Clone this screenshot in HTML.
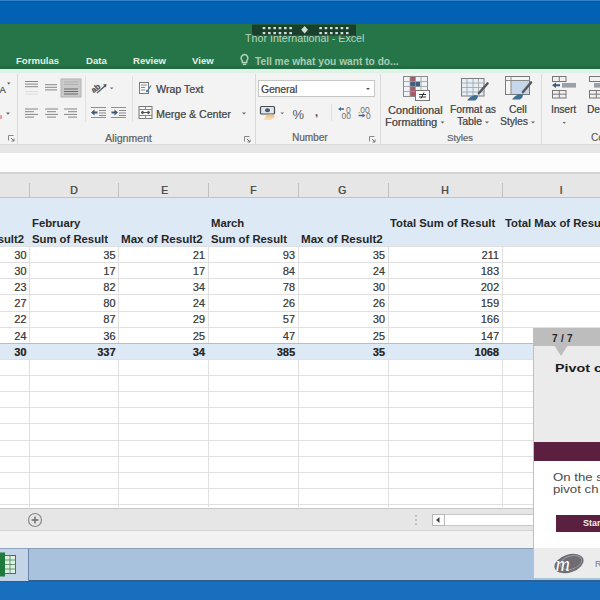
<!DOCTYPE html>
<html><head><meta charset="utf-8"><style>
*{margin:0;padding:0;box-sizing:border-box}
html,body{width:600px;height:600px;overflow:hidden;background:#fff;font-family:"Liberation Sans",sans-serif}
.a{position:absolute}
.t{position:absolute;white-space:pre;line-height:1}
.tab{color:#e3efe6;font-size:9.6px;font-weight:700}
.rt{color:#4f4f4f;font-size:10.8px;text-shadow:0.35px 0 0 rgba(80,80,80,0.8)}
.lbl{color:#6a6a6a;font-size:10px;text-shadow:0.3px 0 0 rgba(106,106,106,0.7)}
.sep{position:absolute;width:1px;background:#d9d9d9}
.ch{color:#4a4a4a;font-size:10.5px;text-shadow:0.4px 0 0 rgba(74,74,74,0.8)}
.vg{position:absolute;width:1px;background:#e0e0e0}
.hg{position:absolute;height:1px;background:#e0e0e0}
.hd{position:absolute;white-space:pre;line-height:1;font-weight:700;color:#262626;font-size:11.3px}
.num{position:absolute;white-space:pre;line-height:1;color:#3c3c3c;font-size:11px;text-align:right;text-shadow:0.3px 0 0 rgba(60,60,60,0.6)}
</style></head><body>
<div id="wrap" style="position:absolute;left:0;top:0;width:600px;height:600px;overflow:hidden">
<div class="a" style="left:0px;top:0px;width:600px;height:24px;background:#0261b3;border-top:1px solid #3382cc"></div>
<div class="a" style="left:0px;top:1px;width:600px;height:1px;background:#0056a6;"></div>
<div class="a" style="left:0px;top:24px;width:600px;height:45px;background:#257548;"></div>
<div class="a" style="left:0px;top:66px;width:600px;height:3px;background:#216c43;"></div>
<div class="a" style="left:0px;top:69px;width:600px;height:4px;background:#dff2e6;"></div>
<div class="a" style="left:0px;top:73px;width:600px;height:71px;background:#f3f3f3;"></div>
<div class="a" style="left:0px;top:144px;width:600px;height:9px;background:#e6e6e6;"></div>
<div class="a" style="left:0px;top:144px;width:600px;height:1px;background:#dadada;"></div>
<div class="a" style="left:0px;top:153px;width:600px;height:19px;background:#fdfdfd;"></div>
<div class="a" style="left:0px;top:172px;width:600px;height:2px;background:#d2d2d2;"></div>
<div class="a" style="left:0px;top:174px;width:600px;height:23px;background:#e6e6e6;"></div>
<div class="a" style="left:0px;top:197px;width:600px;height:1px;background:#bcc4cc;"></div>
<div class="a" style="left:0px;top:198px;width:600px;height:310px;background:#ffffff;"></div>
<div class="a" style="left:0px;top:507px;width:600px;height:24px;background:#e6e6e6;border-top:1px solid #fff"></div>
<div class="a" style="left:0px;top:508px;width:600px;height:1px;background:#c6c6c6;"></div>
<div class="a" style="left:0px;top:530px;width:600px;height:1px;background:#d4d4d4;"></div>
<div class="a" style="left:0px;top:531px;width:600px;height:17px;background:#f2f2f2;"></div>
<div class="a" style="left:0px;top:548px;width:600px;height:33px;background:#a8c2de;border-top:1px solid #8d9eb2"></div>
<div class="a" style="left:0px;top:579px;width:600px;height:1px;background:#a3c6e6;"></div>
<div class="a" style="left:0px;top:580px;width:600px;height:2px;background:#2d5f92;"></div>
<div class="a" style="left:0px;top:582px;width:600px;height:18px;background:#176fbd;"></div>
<div class="t " style="left:245px;top:33px;font-size:10.7px;color:#b9d3c0">Thor International - Excel</div>
<svg class="a" style="left:252px;top:24px" width="105" height="12" viewBox="0 0 105 12"><rect x="0" y="0.5" width="104" height="11" fill="#183326" opacity="0.82"/><rect x="10.70" y="3" width="2.6" height="2.2" fill="#cfe0d4"/><rect x="16.03" y="3" width="2.6" height="2.2" fill="#cfe0d4"/><rect x="21.36" y="3" width="2.6" height="2.2" fill="#cfe0d4"/><rect x="26.69" y="3" width="2.6" height="2.2" fill="#cfe0d4"/><rect x="32.02" y="3" width="2.6" height="2.2" fill="#cfe0d4"/><rect x="37.35" y="3" width="2.6" height="2.2" fill="#cfe0d4"/><rect x="10.70" y="8" width="2.6" height="2.2" fill="#cfe0d4"/><rect x="16.03" y="8" width="2.6" height="2.2" fill="#cfe0d4"/><rect x="21.36" y="8" width="2.6" height="2.2" fill="#cfe0d4"/><rect x="26.69" y="8" width="2.6" height="2.2" fill="#cfe0d4"/><rect x="32.02" y="8" width="2.6" height="2.2" fill="#cfe0d4"/><rect x="37.35" y="8" width="2.6" height="2.2" fill="#cfe0d4"/><rect x="67.30" y="3" width="2.6" height="2.2" fill="#cfe0d4"/><rect x="72.63" y="3" width="2.6" height="2.2" fill="#cfe0d4"/><rect x="77.96" y="3" width="2.6" height="2.2" fill="#cfe0d4"/><rect x="83.29" y="3" width="2.6" height="2.2" fill="#cfe0d4"/><rect x="88.62" y="3" width="2.6" height="2.2" fill="#cfe0d4"/><rect x="93.95" y="3" width="2.6" height="2.2" fill="#cfe0d4"/><rect x="67.30" y="8" width="2.6" height="2.2" fill="#cfe0d4"/><rect x="72.63" y="8" width="2.6" height="2.2" fill="#cfe0d4"/><rect x="77.96" y="8" width="2.6" height="2.2" fill="#cfe0d4"/><rect x="83.29" y="8" width="2.6" height="2.2" fill="#cfe0d4"/><rect x="88.62" y="8" width="2.6" height="2.2" fill="#cfe0d4"/><rect x="93.95" y="8" width="2.6" height="2.2" fill="#cfe0d4"/><path d="M52.6 2 L56 5.7 L52.6 9.4 L49.2 5.7Z" fill="#cfe0d4"/></svg>
<div class="t tab" style="left:16px;top:56px;">Formulas</div>
<div class="t tab" style="left:86px;top:56px;">Data</div>
<div class="t tab" style="left:133px;top:56px;">Review</div>
<div class="t tab" style="left:192px;top:56px;">View</div>
<div class="t " style="left:255px;top:56.5px;font-size:10.2px;font-weight:700;color:#a9cbb4">Tell me what you want to do...</div>
<svg class="a" style="left:239px;top:53px" width="12" height="13" viewBox="0 0 12 13"><path d="M5.5 1.5a3.6 3.6 0 0 0-2.2 6.3V9.6h4.4V7.8A3.6 3.6 0 0 0 5.5 1.5z" fill="none" stroke="#b4d4be" stroke-width="1.5"/><path d="M3.8 11.3h3.4" stroke="#b4d4be" stroke-width="1.5"/></svg>
<div class="t rt" style="left:156px;top:84px;font-size:10.6px">Wrap Text</div>
<div class="t rt" style="left:156px;top:109px;font-size:10.6px">Merge &amp; Center</div>
<div class="t lbl" style="left:105px;top:133px;font-size:10.5px">Alignment</div>
<div class="a" style="left:258px;top:80px;width:117px;height:17px;background:#fff;border:1px solid #c6c6c6"></div>
<div class="t rt" style="left:261px;top:85px;font-size:10.2px">General</div>
<div class="t lbl" style="left:292px;top:133px;">Number</div>
<div class="t rt" style="left:388px;top:105px;font-size:10.9px">Conditional</div>
<div class="t rt" style="left:385px;top:117px;font-size:10.9px">Formatting</div>
<div class="t rt" style="left:450px;top:105px;font-size:10.2px">Format as</div>
<div class="t rt" style="left:457px;top:117px;font-size:10.4px">Table</div>
<div class="t rt" style="left:509px;top:105px;font-size:10.2px">Cell</div>
<div class="t rt" style="left:500px;top:117px;font-size:10.2px">Styles</div>
<div class="t lbl" style="left:447px;top:133px;font-size:9.5px">Styles</div>
<div class="t rt" style="left:551px;top:105px;font-size:10px">Insert</div>
<div class="t rt" style="left:587px;top:105px;font-size:10px">Delete</div>
<div class="t lbl" style="left:591px;top:133px;font-size:10px">Cells</div>
<div class="sep" style="left:17px;top:74px;height:70px"></div>
<div class="sep" style="left:255px;top:74px;height:70px"></div>
<div class="sep" style="left:380px;top:74px;height:70px"></div>
<div class="sep" style="left:541px;top:74px;height:70px"></div>
<div class="sep" style="left:85px;top:76px;height:46px;background:#e0e0e0"></div>
<div class="sep" style="left:132px;top:76px;height:46px;background:#e0e0e0"></div>
<div class="sep" style="left:331px;top:104px;height:17px;background:#e0e0e0"></div>
<svg class="a" style="left:0;top:0" width="600" height="150" viewBox="0 0 600 150"><text x="-0.5" y="92.5" font-family="Liberation Sans" font-size="9.5" fill="#4a4a4a" stroke="#4a4a4a" stroke-width="0.2">A</text><path d="M7 82.5h3.5l-1.75 2z" fill="#555"/><path d="M6 112.5h4l-2 2.2z" fill="#666"/><rect x="0" y="115" width="2" height="4" fill="#e8a0a0"/><path d="M8.5 140.5V135.5H13.5" fill="none" stroke="#888" stroke-width="1"/><path d="M11 138L14 141M14 138.5V141H11.5" fill="none" stroke="#777" stroke-width="1"/><path d="M244.5 141.5V136.5H249.5" fill="none" stroke="#888" stroke-width="1"/><path d="M247 139L250 142M250 139.5V142H247.5" fill="none" stroke="#777" stroke-width="1"/><path d="M369.5 141.5V136.5H374.5" fill="none" stroke="#888" stroke-width="1"/><path d="M372 139L375 142M375 139.5V142H372.5" fill="none" stroke="#777" stroke-width="1"/><rect x="25" y="81" width="13" height="1" fill="#858585"/><rect x="25" y="83.6" width="13" height="1" fill="#858585"/><rect x="25" y="86.2" width="13" height="1" fill="#858585"/><rect x="25" y="91" width="13" height="1" fill="#dedede"/><rect x="25" y="93.5" width="13" height="1" fill="#dedede"/><rect x="45" y="84.2" width="12" height="1" fill="#858585"/><rect x="45" y="86.8" width="12" height="1" fill="#858585"/><rect x="45" y="89.4" width="12" height="1" fill="#858585"/><rect x="61" y="79" width="20" height="18" fill="#c9c9c9" stroke="#b3b3b3" stroke-width="1"/><rect x="64" y="81.5" width="14" height="1" fill="#b0b0b0"/><rect x="64" y="84" width="14" height="1" fill="#b0b0b0"/><rect x="64" y="88.5" width="14" height="1" fill="#6a6a6a"/><rect x="64" y="91" width="14" height="1" fill="#6a6a6a"/><rect x="64" y="93.5" width="14" height="1" fill="#6a6a6a"/><rect x="25" y="108.5" width="13" height="1" fill="#858585"/><rect x="25" y="111.2" width="9" height="1" fill="#858585"/><rect x="25" y="113.9" width="13" height="1" fill="#858585"/><rect x="25" y="116.6" width="9" height="1" fill="#858585"/><rect x="45" y="108.5" width="13" height="1" fill="#858585"/><rect x="47" y="111.2" width="9" height="1" fill="#858585"/><rect x="45" y="113.9" width="13" height="1" fill="#858585"/><rect x="47" y="116.6" width="9" height="1" fill="#858585"/><rect x="64" y="108.5" width="13" height="1" fill="#858585"/><rect x="68" y="111.2" width="9" height="1" fill="#858585"/><rect x="64" y="113.9" width="13" height="1" fill="#858585"/><rect x="68" y="116.6" width="9" height="1" fill="#858585"/><text x="90" y="91" font-family="Liberation Sans" font-size="8" font-weight="700" fill="#5a5a5a" stroke="#5a5a5a" stroke-width="0.3" transform="rotate(-40 95 87)">ab</text><path d="M97 93L105.5 85.5" stroke="#555" stroke-width="1.2"/><path d="M103 84.5l3.5-0.5-0.5 3.5z" fill="#555"/><path d="M110 87.5h3.5l-1.75 1.8z" fill="#666"/><rect x="91" y="107" width="15" height="1" fill="#8e8e8e"/><rect x="91" y="117" width="15" height="1" fill="#8e8e8e"/><rect x="99" y="110" width="7" height="1" fill="#8a8a8a"/><rect x="99" y="112.5" width="7" height="1" fill="#8a8a8a"/><rect x="99" y="115" width="7" height="1" fill="#8a8a8a"/><path d="M91 112.5l3.5-3v2h3v2h-3v2z" fill="#3e5a78"/><rect x="111" y="107" width="15" height="1" fill="#8e8e8e"/><rect x="111" y="117" width="15" height="1" fill="#8e8e8e"/><rect x="119" y="110" width="7" height="1" fill="#8a8a8a"/><rect x="119" y="112.5" width="7" height="1" fill="#8a8a8a"/><rect x="119" y="115" width="7" height="1" fill="#8a8a8a"/><path d="M118 112.5l-3.5-3v2h-3v2h3v2z" fill="#3e5a78"/><rect x="139.5" y="82.5" width="9" height="11" fill="#fafafa" stroke="#777" stroke-width="1"/><path d="M141 85h6M141 87.5h4M141 90h4" stroke="#888" stroke-width="1"/><path d="M147 91.5l4-6" stroke="#4a7aa8" stroke-width="1.3"/><path d="M145.5 89.5l1 3 3-1z" fill="#4a7aa8"/><rect x="139" y="106.5" width="13" height="12" fill="#fafafa" stroke="#777" stroke-width="1"/><path d="M139 109.5h13M139 115.5h13M145.5 106.5v3M145.5 115.5v3" stroke="#888" stroke-width="1"/><path d="M141 112.5h9M141 112.5l2-1.5v3zM150 112.5l-2-1.5v3z" stroke="#555" fill="#555" stroke-width="1"/><path d="M242 112.5h4l-2 2z" fill="#666"/><path d="M366 88h4l-2 2z" fill="#555"/><rect x="260.5" y="106.5" width="14" height="7.5" rx="1" fill="#dbe8f2" stroke="#4a4a4a" stroke-width="1.2"/><ellipse cx="267.5" cy="110.2" rx="2.5" ry="2" fill="#4a5a6a"/><ellipse cx="270" cy="116.5" rx="4.5" ry="2" fill="#f2c98a"/><ellipse cx="268" cy="118.5" rx="4" ry="1.6" fill="#f5d9b0"/><path d="M280.5 112.5h3.5l-1.75 1.8z" fill="#666"/><text x="292.5" y="118.5" font-family="Liberation Sans" font-size="13" fill="#585858">%</text><text x="315" y="116" font-family="Liberation Sans" font-size="11" font-weight="700" fill="#444">,</text><text x="346" y="112.5" font-family="Liberation Sans" font-size="8.5" fill="#707070">0</text><text x="341.5" y="118.5" font-family="Liberation Sans" font-size="8.5" fill="#707070">00</text><path d="M338 109l3-2v1.3h3v1.4h-3v1.3z" fill="#3e6a9a"/><text x="358" y="112.5" font-family="Liberation Sans" font-size="8.5" fill="#707070">.00</text><text x="366" y="118.5" font-family="Liberation Sans" font-size="8.5" fill="#707070">0</text><path d="M365.5 115.5l-3-2v1.3h-4v1.4h4v1.3z" fill="#3e6a9a"/><rect x="403.5" y="76.5" width="24" height="20" fill="#eef3f8" stroke="#8a8a8a" stroke-width="1"/><rect x="410" y="77" width="5.5" height="19" fill="#a85a68"/><rect x="410" y="82" width="10" height="5" fill="#3f5f80"/><path d="M403.5 81.5h24M403.5 86.5h24M403.5 91.5h24M410 76.5v20M415.5 76.5v20M421 76.5v20" stroke="#9a9a9a" stroke-width="0.8" fill="none"/><rect x="415.5" y="90.5" width="14" height="10" fill="#fcfcfc" stroke="#777" stroke-width="1"/><path d="M419 94.5h7M419 97h7M424 92.5l-3 6" stroke="#333" stroke-width="1"/><path d="M440.5 121.5h4l-2 2z" fill="#666"/><path d="M485 121.5h4l-2 2z" fill="#666"/><path d="M531 121.5h4l-2 2z" fill="#666"/><rect x="461.5" y="78.5" width="22.5" height="17.5" fill="#e6eef7" stroke="#7a7a7a" stroke-width="1"/><path d="M461.5 83h22.5M461.5 87.5h22.5M461.5 92h22.5M467 78.5v17.5M473 78.5v17.5M478.5 78.5v17.5" stroke="#a0a0a0" stroke-width="0.8" fill="none"/><path d="M487.5 83.5L479 93" stroke="#5a5a5a" stroke-width="2.6" stroke-linecap="round"/><path d="M467 100.5c2-3 5-5 8-5.5l3 0.5c0 2-1 4-3 5z" fill="#3f6f95"/><rect x="505.5" y="76.5" width="24" height="18" fill="#f5f5f5" stroke="#7a7a7a" stroke-width="1"/><rect x="511" y="80.5" width="18" height="13.5" fill="#c6d7ec"/><path d="M505.5 80.5h24M511 76.5v18" stroke="#8a8a8a" stroke-width="1" fill="none"/><path d="M531 82.5L523 92" stroke="#5a5a5a" stroke-width="2.6" stroke-linecap="round"/><path d="M512 99.5c2-3 5-5 8-5.5l3 0.5c0 2-1 4-3 5z" fill="#3f6f95"/><rect x="552.5" y="76.5" width="13.5" height="5" fill="#f0f0f0" stroke="#777" stroke-width="1"/><path d="M559.3 76.5v5" stroke="#777"/><rect x="562" y="83" width="14" height="4.6" fill="#9aa0a8"/><path d="M552 85.3l4-2.8v1.8h4v2h-4v1.8z" fill="#3e5a78"/><rect x="552.5" y="90.5" width="13.5" height="7.5" fill="#f0f0f0" stroke="#777" stroke-width="1"/><path d="M559.3 90.5v7.5M552.5 94.2h13.5" stroke="#777"/><path d="M562.5 122h3.5l-1.75 1.8z" fill="#666"/><rect x="589.5" y="76.5" width="14" height="5" fill="#f0f0f0" stroke="#777" stroke-width="1"/><rect x="594" y="83" width="10" height="4.6" fill="#9aa0a8"/><rect x="589.5" y="90.5" width="14" height="7.5" fill="#f0f0f0" stroke="#777" stroke-width="1"/><path d="M596.3 90.5v7.5M589.5 94.2h14" stroke="#777"/></svg>
<div class="a" style="left:29px;top:183px;width:1px;height:14px;background:#c0c0c0;"></div>
<div class="a" style="left:118px;top:183px;width:1px;height:14px;background:#c0c0c0;"></div>
<div class="a" style="left:208px;top:183px;width:1px;height:14px;background:#c0c0c0;"></div>
<div class="a" style="left:298px;top:183px;width:1px;height:14px;background:#c0c0c0;"></div>
<div class="a" style="left:388px;top:183px;width:1px;height:14px;background:#c0c0c0;"></div>
<div class="a" style="left:502px;top:183px;width:1px;height:14px;background:#c0c0c0;"></div>
<div class="t ch" style="left:70px;top:185px;">D</div>
<div class="t ch" style="left:161px;top:185px;">E</div>
<div class="t ch" style="left:250px;top:185px;">F</div>
<div class="t ch" style="left:338px;top:185px;">G</div>
<div class="t ch" style="left:441px;top:185px;">H</div>
<div class="t ch" style="left:559.5px;top:185px;font-family:"Liberation Serif";font-size:11px">I</div>
<div class="a" style="left:0px;top:198px;width:600px;height:48px;background:#dde9f5;"></div>
<div class="t hd" style="left:32px;top:218px;">February</div>
<div class="t hd" style="left:211px;top:218px;">March</div>
<div class="t hd" style="left:390px;top:218px;">Total Sum of Result</div>
<div class="t hd" style="left:505px;top:218px;">Total Max of Result</div>
<div class="hd" style="right:576px;top:234px">sult2</div>
<div class="t hd" style="left:32px;top:234px;">Sum of Result</div>
<div class="t hd" style="left:121px;top:233px;font-size:11.6px">Max of Result2</div>
<div class="t hd" style="left:211px;top:234px;">Sum of Result</div>
<div class="t hd" style="left:301px;top:233px;font-size:11.6px">Max of Result2</div>
<div class="hg" style="left:0;top:246px;width:600px"></div>
<div class="hg" style="left:0;top:262px;width:600px"></div>
<div class="hg" style="left:0;top:278px;width:600px"></div>
<div class="hg" style="left:0;top:294px;width:600px"></div>
<div class="hg" style="left:0;top:311px;width:600px"></div>
<div class="hg" style="left:0;top:327px;width:600px"></div>
<div class="hg" style="left:0;top:343px;width:600px"></div>
<div class="hg" style="left:0;top:359px;width:600px"></div>
<div class="hg" style="left:0;top:375px;width:600px"></div>
<div class="hg" style="left:0;top:391px;width:600px"></div>
<div class="hg" style="left:0;top:407px;width:600px"></div>
<div class="hg" style="left:0;top:423px;width:600px"></div>
<div class="hg" style="left:0;top:440px;width:600px"></div>
<div class="hg" style="left:0;top:456px;width:600px"></div>
<div class="hg" style="left:0;top:472px;width:600px"></div>
<div class="hg" style="left:0;top:488px;width:600px"></div>
<div class="hg" style="left:0;top:504px;width:600px"></div>
<div class="vg" style="left:29px;top:246px;height:261px"></div>
<div class="vg" style="left:118px;top:246px;height:261px"></div>
<div class="vg" style="left:208px;top:246px;height:261px"></div>
<div class="vg" style="left:298px;top:246px;height:261px"></div>
<div class="vg" style="left:388px;top:246px;height:261px"></div>
<div class="vg" style="left:502px;top:246px;height:261px"></div>
<div class="a" style="left:0px;top:343px;width:600px;height:16px;background:#dde9f5;border-top:1px solid #a9c0d8"></div>
<div class="num" style="right:573.5px;top:249.9px">30</div>
<div class="num" style="right:484.5px;top:249.9px">35</div>
<div class="num" style="right:395.0px;top:249.9px">21</div>
<div class="num" style="right:305.0px;top:249.9px">93</div>
<div class="num" style="right:215.0px;top:249.9px">35</div>
<div class="num" style="right:101.0px;top:249.9px">211</div>
<div class="num" style="right:573.5px;top:266.0px">30</div>
<div class="num" style="right:484.5px;top:266.0px">17</div>
<div class="num" style="right:395.0px;top:266.0px">17</div>
<div class="num" style="right:305.0px;top:266.0px">84</div>
<div class="num" style="right:215.0px;top:266.0px">24</div>
<div class="num" style="right:101.0px;top:266.0px">183</div>
<div class="num" style="right:573.5px;top:282.1px">23</div>
<div class="num" style="right:484.5px;top:282.1px">82</div>
<div class="num" style="right:395.0px;top:282.1px">34</div>
<div class="num" style="right:305.0px;top:282.1px">78</div>
<div class="num" style="right:215.0px;top:282.1px">30</div>
<div class="num" style="right:101.0px;top:282.1px">202</div>
<div class="num" style="right:573.5px;top:298.3px">27</div>
<div class="num" style="right:484.5px;top:298.3px">80</div>
<div class="num" style="right:395.0px;top:298.3px">24</div>
<div class="num" style="right:305.0px;top:298.3px">26</div>
<div class="num" style="right:215.0px;top:298.3px">26</div>
<div class="num" style="right:101.0px;top:298.3px">159</div>
<div class="num" style="right:573.5px;top:314.4px">22</div>
<div class="num" style="right:484.5px;top:314.4px">87</div>
<div class="num" style="right:395.0px;top:314.4px">29</div>
<div class="num" style="right:305.0px;top:314.4px">57</div>
<div class="num" style="right:215.0px;top:314.4px">30</div>
<div class="num" style="right:101.0px;top:314.4px">166</div>
<div class="num" style="right:573.5px;top:330.5px">24</div>
<div class="num" style="right:484.5px;top:330.5px">36</div>
<div class="num" style="right:395.0px;top:330.5px">25</div>
<div class="num" style="right:305.0px;top:330.5px">47</div>
<div class="num" style="right:215.0px;top:330.5px">25</div>
<div class="num" style="right:101.0px;top:330.5px">147</div>
<div class="num" style="right:573.5px;top:346.9px;font-weight:700;color:#262626">30</div>
<div class="num" style="right:484.5px;top:346.9px;font-weight:700;color:#262626">337</div>
<div class="num" style="right:395.0px;top:346.9px;font-weight:700;color:#262626">34</div>
<div class="num" style="right:305.0px;top:346.9px;font-weight:700;color:#262626">385</div>
<div class="num" style="right:215.0px;top:346.9px;font-weight:700;color:#262626">35</div>
<div class="num" style="right:101.0px;top:346.9px;font-weight:700;color:#262626">1068</div>
<svg class="a" style="left:26px;top:512px" width="18" height="16" viewBox="0 0 18 16"><circle cx="9" cy="8" r="6.5" fill="none" stroke="#8a8a8a" stroke-width="1.2"/><path d="M9 4.5v7M5.5 8h7" stroke="#6a6a6a" stroke-width="1.4"/></svg>
<svg class="a" style="left:414px;top:514px" width="4" height="12"><circle cx="2" cy="2" r="0.8" fill="#999"/><circle cx="2" cy="6" r="0.8" fill="#999"/><circle cx="2" cy="10" r="0.8" fill="#999"/></svg>
<div class="a" style="left:432px;top:514px;width:13px;height:12px;background:#fdfdfd;border:1px solid #b8b8b8"></div>
<svg class="a" style="left:435px;top:516px" width="6" height="8"><path d="M4.5 1v6L1 4z" fill="#444"/></svg>
<div class="a" style="left:445px;top:514px;width:90px;height:12px;background:#ffffff;border-top:1px solid #c8c8c8;border-bottom:1px solid #c8c8c8"></div>
<div class="a" style="left:0px;top:548px;width:29px;height:33px;background:#c3d3e8;border-right:1px solid #6d86a8;border-top:1px solid #8ea6c4"></div>
<svg class="a" style="left:0;top:552px" width="18" height="26" viewBox="0 0 18 26"><rect x="4.5" y="3.5" width="11" height="18" fill="#dcefe0" stroke="#3a7a4e" stroke-width="1"/><path d="M4.5 8h11M4.5 12.5h11M4.5 17h11M10 3.5v18" stroke="#5a8a66" stroke-width="0.9"/><rect x="0" y="0.5" width="5" height="24" fill="#1f7a3e"/></svg>
<div class="a" style="left:533px;top:328px;width:67px;height:250px;background:#ffffff;border-left:1px solid #c0c0c0"></div>
<div class="a" style="left:534px;top:328px;width:66px;height:18px;background:#bdbdbd;"></div>
<div class="a" style="left:534px;top:346px;width:66px;height:96px;background:#ebebeb;"></div>
<svg class="a" style="left:554px;top:345px" width="16" height="12"><path d="M0 0h14L7 11z" fill="#bdbdbd"/></svg>
<div class="a" style="left:534px;top:442px;width:66px;height:19px;background:#5b1f3f;"></div>
<div class="a" style="left:556px;top:515px;width:44px;height:17px;background:#5b1f3f;"></div>
<div class="a" style="left:534px;top:548px;width:66px;height:30px;background:#ececec;"></div>
<div class="t " style="left:552px;top:334px;font-size:10px;font-weight:700;color:#262626;letter-spacing:0.3px">7 / 7</div>
<div class="t " style="left:555px;top:363px;font-size:11px;font-weight:700;color:#1a1a1a;transform:scaleX(1.3);transform-origin:0 0">Pivot c</div>
<div class="t " style="left:553px;top:472px;font-size:11px;color:#4a4a4a;transform:scaleX(1.2);transform-origin:0 0">On the s</div>
<div class="t " style="left:553px;top:484px;font-size:11px;color:#4a4a4a;transform:scaleX(1.2);transform-origin:0 0">pivot ch</div>
<div class="t " style="left:583px;top:519px;font-size:9px;font-weight:700;color:#f4eef2">Start</div>
<svg class="a" style="left:552px;top:551px" width="34" height="25" viewBox="0 0 34 25"><ellipse cx="17" cy="12.5" rx="15" ry="9" transform="rotate(-18 17 12.5)" fill="#6f6c74"/><ellipse cx="19" cy="11.5" rx="11" ry="6.5" transform="rotate(-18 19 11.5)" fill="none" stroke="#9a979e" stroke-width="1"/><text x="3.5" y="19.5" font-family="Liberation Serif" font-style="italic" font-size="20" fill="#fff">m</text></svg>
<div class="t " style="left:595px;top:560px;font-size:9px;color:#777">R</div>
</div></body></html>
